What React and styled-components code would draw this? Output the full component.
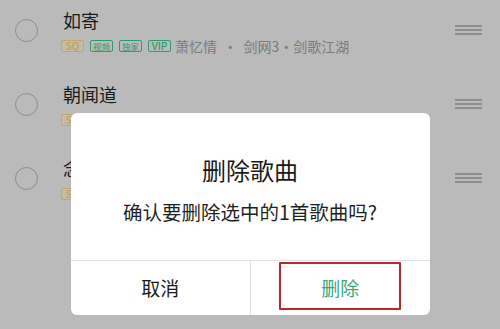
import React from 'react';
import styled, { createGlobalStyle } from 'styled-components';

const Global = createGlobalStyle`
  html, body {
    margin: 0;
    padding: 0;
    width: 500px;
    height: 329px;
    overflow: hidden;
    background: #bababa;
    font-family: "Noto Sans CJK SC", "Noto Sans", sans-serif;
  }
`;

const Page = styled.div`
  width: 500px;
  height: 329px;
  position: relative;
  overflow: hidden;
  background: #bababa;
`;

const List = styled.div`
  display: flex;
  flex-direction: column;
  margin-top: -7px;
`;

const Row = styled.div`
  height: 74px;
  display: flex;
  align-items: center;
  padding: 0 18px 0 15px;
`;

const Radio = styled.div`
  width: 21px;
  height: 21px;
  border-radius: 50%;
  border: 1.5px solid #8c8c8c;
  flex-shrink: 0;
`;

const Info = styled.div`
  flex: 1;
  display: flex;
  flex-direction: column;
  gap: 8px;
  margin-left: 23px;
`;

const Title = styled.div`
  font-size: 18px;
  line-height: 24px;
  color: #1b1b1b;
  padding-left: 2px;
`;

const Meta = styled.div`
  display: flex;
  align-items: center;
  gap: 6px;
  height: 12px;
`;

const Tag = styled.span`
  display: inline-flex;
  align-items: center;
  justify-content: center;
  box-sizing: border-box;
  height: 12px;
  min-width: ${p => p.$w || 22}px;
  padding: 0 2px;
  border: 1px solid ${p => (p.$gold ? '#c8a56a' : '#2f9a6e')};
  color: ${p => (p.$gold ? '#bf9e62' : '#2f9a6e')};
  background: ${p => (p.$gold ? '#c6bca5' : '#b9bdb9')};
  border-radius: 2px;
  font-size: ${p => (p.$latin ? 10 : 8.5)}px;
  line-height: 10px;
  font-weight: ${p => (p.$latin ? 500 : 400)};
`;

const Artist = styled.span`
  font-size: 14px;
  line-height: 14px;
  color: #7b7b7b;
  margin-left: -2px;
  white-space: nowrap;
`;

const Handle = styled.div`
  width: 27px;
  display: flex;
  flex-direction: column;
  gap: 2.5px;
  flex-shrink: 0;
  span {
    height: 1.5px;
    background: #8e8e8e;
  }
`;

const Overlay = styled.div`
  position: absolute;
  inset: 0;
  display: flex;
  justify-content: center;
  align-items: flex-start;
  padding-top: 113px;
`;

const Dialog = styled.div`
  width: 359px;
  background: #fff;
  border-radius: 6px;
  overflow: hidden;
  display: flex;
  flex-direction: column;
`;

const Body = styled.div`
  display: flex;
  flex-direction: column;
  align-items: center;
  padding: 43px 0 36px;
  gap: 16px;
`;

const DialogTitle = styled.div`
  font-size: 24px;
  line-height: 28px;
  color: #1a1a1a;
`;

const Message = styled.div`
  font-size: 19.5px;
  line-height: 24px;
  color: #1f1f1f;
  white-space: nowrap;
`;

const Actions = styled.div`
  display: grid;
  grid-template-columns: 1fr 1fr;
  border-top: 1px solid #e2e2e2;
  height: 54px;
`;

const Action = styled.div`
  position: relative;
  display: flex;
  align-items: center;
  justify-content: center;
  padding-bottom: 2px;
  font-size: 19px;
  color: ${p => (p.$primary ? '#3aa876' : '#1a1a1a')};
  & + & {
    border-left: 1px solid #e2e2e2;
  }
`;

const Highlight = styled.div`
  position: absolute;
  left: 28px;
  right: 29px;
  top: 1px;
  bottom: 5px;
  border: 2px solid #b8262e;
  border-radius: 1px;
`;

const songs = [
  { title: '如寄' },
  { title: '朝闻道' },
  { title: '念奴娇' },
];

const Song = ({ title }) => (
  <Row>
    <Radio />
    <Info>
      <Title>{title}</Title>
      <Meta>
        <Tag $gold $latin $w={23}>SQ</Tag>
        <Tag>视频</Tag>
        <Tag>独家</Tag>
        <Tag $latin $w={23}>VIP</Tag>
        <Artist>萧忆情 &nbsp;·&nbsp; 剑网3·剑歌江湖</Artist>
      </Meta>
    </Info>
    <Handle>
      <span />
      <span />
      <span />
    </Handle>
  </Row>
);

const App = () => (
  <Page>
    <Global />
    <List>
      {songs.map(s => (
        <Song key={s.title} title={s.title} />
      ))}
    </List>
    <Overlay>
      <Dialog>
        <Body>
          <DialogTitle>删除歌曲</DialogTitle>
          <Message>确认要删除选中的1首歌曲吗?</Message>
        </Body>
        <Actions>
          <Action>取消</Action>
          <Action $primary>
            删除
            <Highlight />
          </Action>
        </Actions>
      </Dialog>
    </Overlay>
  </Page>
);

export default App;
